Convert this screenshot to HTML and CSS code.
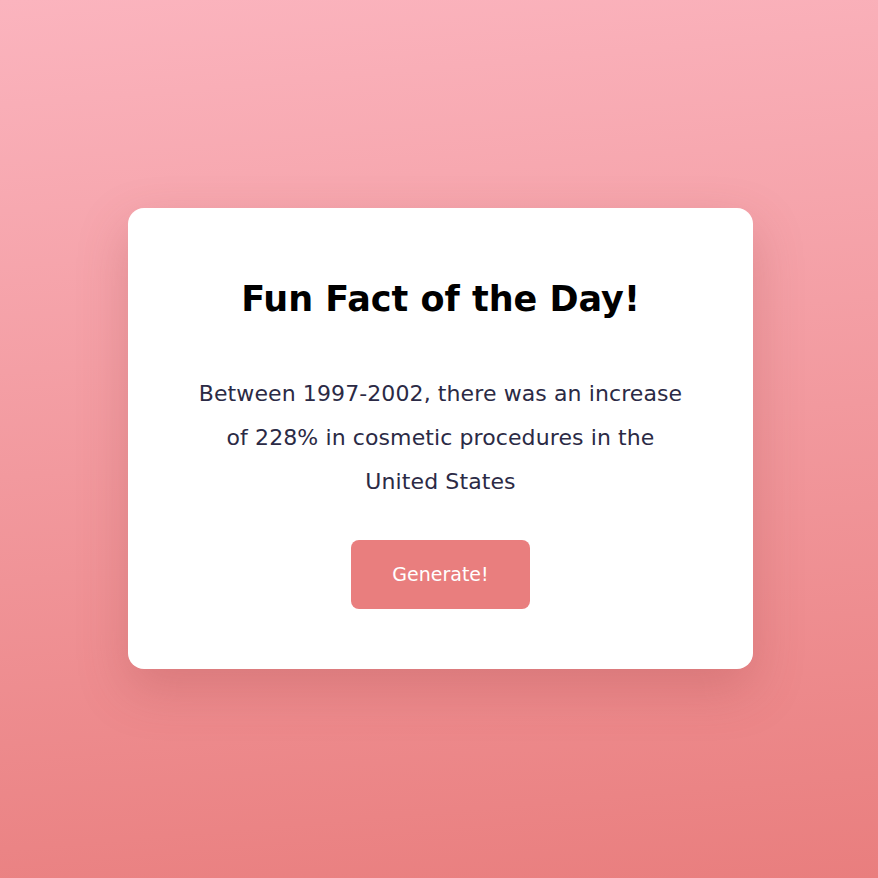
FILE: index.html
```html
<!DOCTYPE html>
<html lang="en">
<head>
<meta charset="utf-8">
<title>Fun Fact of the Day</title>
<link rel="stylesheet" href="styles.css">
</head>
<body>
  <main class="page">
    <section class="card">
      <h1 class="card-title">Fun Fact of the Day!</h1>
      <p class="card-fact">Between 1997-2002, there was an increase of 228% in cosmetic procedures in the United States</p>
      <button class="card-button" type="button">Generate!</button>
    </section>
  </main>
</body>
</html>
```

FILE: styles.css
```css
* { box-sizing: border-box; }

html, body {
  margin: 0;
  height: 100%;
}

body {
  font-family: "DejaVu Sans", "Open Sans", sans-serif;
  background: linear-gradient(175deg, #fbb4be 0%, #e97e7e 100%);
}

.page {
  min-height: 100vh;
  display: flex;
  align-items: center;
  justify-content: center;
  padding-left: 3px;
  padding-bottom: 2px;
}

.card {
  width: 625px;
  height: 461px;
  background: #ffffff;
  border-radius: 16px;
  box-shadow: 0 20px 50px rgba(150, 60, 60, 0.25);
  display: flex;
  flex-direction: column;
  align-items: center;
  padding: 64px 60px 0;
}

.card-title {
  margin: 0;
  font-size: 35px;
  line-height: 54px;
  font-weight: 700;
  color: #000;
}

.card-fact {
  margin: 46px 0 0;
  max-width: 495px;
  font-size: 22px;
  line-height: 44px;
  letter-spacing: 0.1px;
  color: #2b2a45;
  text-align: center;
}

.card-button {
  margin-top: 36px;
  width: 179px;
  height: 69px;
  border: none;
  border-radius: 8px;
  background: #e97e7e;
  color: #ffffff;
  font-family: inherit;
  font-size: 19px;
  cursor: pointer;
}
```
